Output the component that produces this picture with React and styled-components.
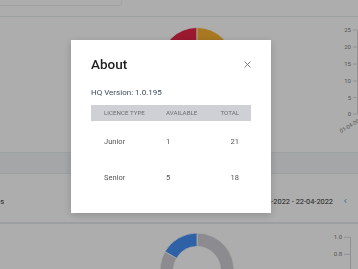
import React from "react";
import styled, { createGlobalStyle } from "styled-components";

const Global = createGlobalStyle`
  html, body { margin: 0; padding: 0; background: #ffffff; }
  body { font-family: Roboto, "Liberation Sans", Arial, sans-serif; overflow: hidden; }
  * { box-sizing: border-box; }
`;

const Page = styled.div`
  width: 358px;
  height: 269px;
  overflow: hidden;
  background: #ffffff;
`;

const TopBar = styled.div`
  height: 17px;
  border-bottom: 1px solid #e6eeee;
  display: flex;
  align-items: flex-start;
`;

const Field = styled.div`
  width: 122px;
  height: 6px;
  border-right: 1px solid #f0f2f2;
  border-bottom: 1px solid #eef0f0;
  border-bottom-right-radius: 3px;
`;

const ChartsRow = styled.div`
  display: flex;
  height: 135px;
  padding-left: 157px;
`;

const PieSvg = styled.svg`
  width: 80px;
  height: 80px;
  margin-top: ${(p) => p.$top}px;
  flex: none;
`;

const AxisSvg = styled.svg`
  margin-left: auto;
  flex: none;
  width: ${(p) => p.$w}px;
  height: ${(p) => p.$h}px;
  overflow: visible;
`;

const Band = styled.div`
  height: 22px;
  border-top: 1px solid #e6eeee;
  border-bottom: 1px solid #e6eeee;
  background: #f3f5f7;
`;

const InfoRow = styled.div`
  height: 48px;
  display: flex;
  align-items: center;
  padding-top: 6px;
  padding-right: 10px;
  font-size: 7.4px;
  color: #333333;
`;

const LabelClip = styled.div`
  width: 4px;
  overflow: hidden;
  display: flex;
  justify-content: flex-end;
  white-space: nowrap;
`;

const DateText = styled.span`
  margin-left: auto;
  white-space: nowrap;
`;

const Chevron = styled.svg`
  width: 5px;
  height: 6px;
  margin-left: 10px;
  flex: none;
`;

const Divider = styled.div`
  height: 2px;
  background: #e6eaea;
`;

const BottomRow = styled.div`
  display: flex;
  height: 60px;
  padding-left: 157px;
  padding-right: 7px;
`;

const Overlay = styled.div`
  position: fixed;
  inset: 0;
  background: rgba(0, 0, 0, 0.32);
  padding: 40px 0 0 71px;
`;

const Modal = styled.div`
  width: 200px;
  height: 173px;
  background: #ffffff;
  padding: 16px 20px 17px 20px;
  box-shadow: 0 2px 8px rgba(0, 0, 0, 0.18);
  display: flex;
  flex-direction: column;
`;

const TitleRow = styled.div`
  height: 16px;
  display: flex;
  align-items: center;
  justify-content: space-between;
`;

const Title = styled.h2`
  margin: 0;
  font-size: 13.5px;
  line-height: 16px;
  font-weight: 500;
  color: #1f1f1f;
`;

const CloseButton = styled.button`
  border: 0;
  background: none;
  padding: 0;
  width: 8px;
  height: 8px;
  display: flex;
  align-items: center;
  justify-content: center;
`;

const Version = styled.div`
  margin-top: 16px;
  font-size: 8px;
  line-height: 10px;
  color: #3d4a5c;
`;

const Table = styled.div`
  margin-top: 7px;
  display: grid;
  grid-template-columns: 62px 54px 44px;
`;

const HeadCell = styled.div`
  height: 16px;
  background: #cfd0d5;
  font-size: 6.2px;
  line-height: 16px;
  color: #6a6d74;
  text-transform: uppercase;
  white-space: nowrap;
  padding: ${(p) => (p.$right ? "0 12px 0 0" : "0 0 0 13px")};
  text-align: ${(p) => (p.$right ? "right" : "left")};
`;

const Cell = styled.div`
  height: 36px;
  font-size: 7.5px;
  line-height: 36px;
  color: #555555;
  white-space: nowrap;
  padding: ${(p) => (p.$right ? "0 12px 0 0" : "0 0 0 13px")};
  text-align: ${(p) => (p.$right ? "right" : "left")};
  margin-top: ${(p) => (p.$first ? 3 : 0)}px;
`;

const rows = [
  { type: "Junior", available: 1, total: 21 },
  { type: "Senior", available: 5, total: 18 },
];

const topLabels = [
  ["25", 31],
  ["20", 48],
  ["15", 65],
  ["10", 82],
  ["5", 98.5],
  ["0", 115],
];

function TopAxis() {
  const top = 18;
  return (
    <AxisSvg $w={40} $h={135} viewBox="0 0 40 135">
      <line x1="39.5" y1={31 - top} x2="39.5" y2={115 - top} stroke="#d8d8d8" strokeWidth="1" />
      {topLabels.map(([t, y]) => (
        <g key={t}>
          <line x1="35" x2="39.5" y1={y - top} y2={y - top} stroke="#d8d8d8" strokeWidth="1" />
          <text
            x="33"
            y={y - top + 2.1}
            fontSize="6"
            fill="#808080"
            textAnchor="end"
            fontFamily="Roboto, sans-serif"
          >
            {t}
          </text>
        </g>
      ))}
      <text
        x="23"
        y={134 - top}
        fontSize="5.5"
        fill="#808080"
        fontFamily="Roboto, sans-serif"
        transform={`rotate(-30 23 ${134 - top})`}
      >
        01-04-2022
      </text>
    </AxisSvg>
  );
}

const bottomLabels = [
  ["1.0", 237.3],
  ["0.8", 254.3],
];

function BottomAxis() {
  const top = 224;
  return (
    <AxisSvg $w={28} $h={60} viewBox="0 0 28 60">
      <line x1="27.5" y1={237 - top} x2="27.5" y2="60" stroke="#d8d8d8" strokeWidth="1" />
      {bottomLabels.map(([t, y]) => (
        <g key={t}>
          <line x1="21" x2="27.5" y1={y - top} y2={y - top} stroke="#d8d8d8" strokeWidth="1" />
          <text
            x="19"
            y={y - top + 2.1}
            fontSize="6"
            fill="#808080"
            textAnchor="end"
            fontFamily="Roboto, sans-serif"
          >
            {t}
          </text>
        </g>
      ))}
    </AxisSvg>
  );
}

export default function App() {
  return (
    <>
      <Global />
      <Page>
        <TopBar>
          <Field />
        </TopBar>
        <ChartsRow>
          <PieSvg $top={7} viewBox="0 0 80 80">
            <path d="M40 40 L3.5 40 A36.5 36.5 0 0 1 40 3.5 Z" fill="#e42546" stroke="#fff" strokeWidth="0.8" />
            <path d="M40 40 L40 3.5 A36.5 36.5 0 0 1 76.5 40 Z" fill="#f9b234" stroke="#fff" strokeWidth="0.8" />
            <path d="M40 40 L76.5 40 A36.5 36.5 0 0 1 40 76.5 Z" fill="#4caf50" stroke="#fff" strokeWidth="0.8" />
            <path d="M40 40 L40 76.5 A36.5 36.5 0 0 1 3.5 40 Z" fill="#4690f5" stroke="#fff" strokeWidth="0.8" />
          </PieSvg>
          <TopAxis />
        </ChartsRow>
        <Band />
        <InfoRow>
          <LabelClip>Statistics</LabelClip>
          <DateText>01-04-2022 - 22-04-2022</DateText>
          <Chevron viewBox="0 0 5 6">
            <path d="M3.5 1 L1.5 3 L3.5 5" fill="none" stroke="#5db4c8" strokeWidth="1" />
          </Chevron>
        </InfoRow>
        <Divider />
        <BottomRow>
          <PieSvg $top={6} viewBox="0 0 80 80">
            <path
              d="M40 3 A37 37 0 1 1 7.96 21.5 L19.65 28.25 A23.5 23.5 0 1 0 40 16.5 Z"
              fill="#cfcfd5"
              stroke="#fff"
              strokeWidth="0.8"
            />
            <path
              d="M40 3 A37 37 0 0 0 7.96 21.5 L19.65 28.25 A23.5 23.5 0 0 1 40 16.5 Z"
              fill="#4690f5"
              stroke="#fff"
              strokeWidth="0.8"
            />
          </PieSvg>
          <BottomAxis />
        </BottomRow>
      </Page>
      <Overlay>
        <Modal>
          <TitleRow>
            <Title>About</Title>
            <CloseButton aria-label="Close">
              <svg width="7" height="7" viewBox="0 0 7 7">
                <path d="M0.5 0.5 L6.5 6.5 M6.5 0.5 L0.5 6.5" stroke="#6f6f6f" strokeWidth="0.9" />
              </svg>
            </CloseButton>
          </TitleRow>
          <Version>HQ Version: 1.0.195</Version>
          <Table>
            <HeadCell>Licence Type</HeadCell>
            <HeadCell>Available</HeadCell>
            <HeadCell $right>Total</HeadCell>
            {rows.map((r, i) => (
              <React.Fragment key={r.type}>
                <Cell $first={i === 0}>{r.type}</Cell>
                <Cell $first={i === 0}>{r.available}</Cell>
                <Cell $first={i === 0} $right>
                  {r.total}
                </Cell>
              </React.Fragment>
            ))}
          </Table>
        </Modal>
      </Overlay>
    </>
  );
}
